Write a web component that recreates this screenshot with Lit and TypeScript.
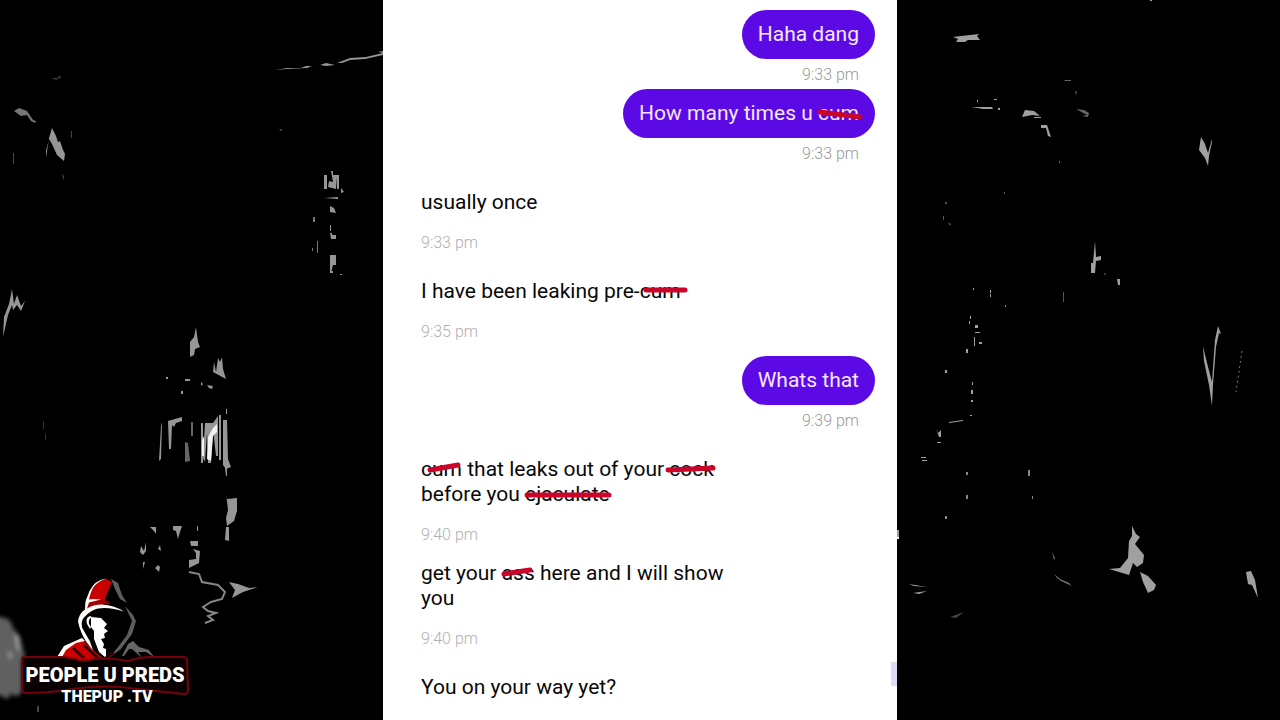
import { LitElement, html, css, svg } from "lit";
import { customElement, property } from "lit/decorators.js";

type Strike = { word: string; line: [number, number, number, number] };
type Part = string | Strike;
type Message = { from: "me" | "them"; time: string; parts: Part[]; follows?: boolean };

const MESSAGES: Message[] = [
  { from: "me", time: "9:33 pm", parts: ["Haha dang"], follows: true },
  { from: "me", time: "9:33 pm", parts: ["How many times u ", { word: "cum", line: [2, 11, 42, 16] }], follows: true },
  { from: "them", time: "9:33 pm", parts: ["usually once"] },
  { from: "them", time: "9:35 pm", parts: ["I have been leaking pre-", { word: "cum", line: [6, 11, 45, 11] }] },
  { from: "me", time: "9:39 pm", parts: ["Whats that"] },
  {
    from: "them",
    time: "9:40 pm",
    parts: [
      { word: "cum", line: [9, 13, 37, 8] },
      " that leaks out of your ",
      { word: "cock", line: [-1, 13, 44, 11] },
      " before you ",
      { word: "ejaculate", line: [2, 13, 84, 13] },
    ],
  },
  {
    from: "them",
    time: "9:40 pm",
    parts: ["get your ", { word: "ass", line: [2, 13, 28, 9] }, " here and I will show you"],
    follows: true,
  },
  { from: "them", time: "", parts: ["You on your way yet?"] },
];

@customElement("chat-message")
class ChatMessage extends LitElement {
  @property({ attribute: false }) message!: Message;

  static styles = css`
    :host { display: block; }
    .row { display: flex; flex-direction: column; align-items: flex-start; }
    .me { align-items: flex-end; }
    .bubble {
      box-sizing: border-box;
      max-width: 75%;
      margin: 0;
      padding: 12px 16px;
      border-radius: 25px;
      font-size: 21px;
      line-height: 25px;
      color: #080808;
    }
    .me .bubble { background: #5b0ae6; color: #f6e6ff; }
    .time {
      padding: 6px 16px 4px;
      font-size: 16px;
      line-height: 20px;
      font-weight: 300;
      color: #b0b0b0;
    }
    .me .time { color: #999; }
    .struck { position: relative; text-decoration: none; }
    .mark {
      position: absolute;
      inset: 0;
      width: 100%;
      height: 100%;
      overflow: visible;
      stroke: #cb0529;
      stroke-width: 5;
      stroke-linecap: round;
    }
  `;

  render() {
    const m = this.message;
    return html`<div class="row ${m.from}">
      <p class="bubble">${m.parts.map((p) =>
        typeof p === "string"
          ? p
          : html`<s class="struck">${p.word}<svg class="mark" aria-hidden="true"><line x1=${p.line[0]} y1=${p.line[1]} x2=${p.line[2]} y2=${p.line[3]} /></svg></s>`
      )}</p>
      ${m.time ? html`<time class="time">${m.time}</time>` : ""}
    </div>`;
  }
}

const leftScene = svg`
  <g fill="#969696">
    <path d="M275 70l12-2 14 0 5-2 6 0-5 2-20 1zM320 65l6-2 9 2-9 1zM337 63l13-5 16-1 17-4v2l-18 4-15 1-8 3zM378 52l5-1v2z"/>
    <path d="M51 78l6 0 3-3 1 3-5 2z" fill="#333"/>
    <path d="M14 111l5-3 8 3 2 3 4 6 3 1-1 2-4-2-4-6-6 1z" fill="#777"/>
    <path d="M46 158l3-20 3-10 4 8 2 6 2-1 3 9 2 4-1 7-7-6-5-11-3-5-3 12z"/>
    <path d="M13 153h1v11h-1zM71 131h1v7h-1zM62 174l2 2v5z" fill="#444"/>
    <path d="M279 130l2-1 1 2zM313 217h2v5h-2zM312 248h1v3h-1zM317 241h1v12h-1z" fill="#777"/>
    <path d="M324 175h3v14h-3zM331 171h2v4h6v14h-2v-12l-1 12-8-2 1-6 4 1zM324 198l14-1v2zM341 188l3 4-3 1zM330 206l4 2 2 5-6-1zM330 225h1v6h-1zM330 233h2v2h4v4h-5zM330 255h6v10h-3l-2 8-1-2v-6zM330 271h3v2h-3zM340 274h2v1h-2z"/>
    <path d="M3 337l1-20 5-13 3-15 2 15 3-9 4 11 4-5-4 10-4-6-4 5-1-5-4 10z"/>
    <path d="M196 327l2 15 2 5-5 2-1 6-4 2v-15l4-5zM214 362l2 10 2-14 2 4 2-5 1 12 3 10-13-7zM185 379h5v2h-5zM166 377h2v2h-2zM181 391h2v3h-2zM201 382l2 2-2 2zM207 385l6 1-1 3-3-1z"/>
    <path d="M43 421h1v8h-1zM45 434h1v6h-1z" fill="#333"/>
    <path d="M162 422l-1 37-2 2 2-35zM168 421l14-4v4l-6 2-2 4-2-2-1 24h-2zM201 423h2v40h-2zM205 423h8l5-7v40h-2l-3-27-2 34h-3l-1-30-2 29-2-4zM223 420h4l1 39 3 8-5 2-3-4zM219 415h2v45h-2zM226 409h1v5h-1zM225 468h2v8h-1z"/>
    <path d="M188 443l2 18-5 1v-20zM191 422h2v14h-2z" fill="#666"/>
    <path d="M226 493l1 6 10-1v13l-3 10-7 5-1-8 2-8zM226 527h3v14l-4-1zM150 527h6v7l-2-3zM173 526h9l-2 6-2 7-2-8-3-1zM197 526h1v5h-1zM141 546l3 5 2-9v9l-3 4-3-3zM160 545l1 6-3-2zM143 562h2l-2 7zM158 565l2 2-1 5-4-4zM190 541h8v5h-7zM193 549l7 2-1 12-10 5v-8l7-1v-6z"/>
    <path d="M229 582l9 2 11 4 9-1-15 5-11 6 3-8z"/>
  </g>
  <path d="M189 572l10 2 3 8 16 3 7 7-3 7-11 3-8 5 5 4 8 2-8 3 5 4-8 3" fill="none" stroke="#858585" stroke-width="2"/>
  <filter id="soft"><feGaussianBlur stdDeviation="2"/></filter>
  <g filter="url(#soft)">
    <path d="M-4 616l12 3 4 5 2 10 6 2 3 14 2 6-3 4v32l-6 5-5-4-3 6-12-5z" fill="#606060"/>
    <path d="M14 628l4 8 2 16-3-4zM8 650l4 5-2 5z" fill="#aaa"/>
  </g>
  <path d="M37 706h2v6h-2z" fill="#444"/>
  <path d="M213 428l4-4v8l-4 4-2 25-4-2 1-22zM202 440l2-4v20h-2z" fill="#f2f2f2"/>
`;

const rightScene = svg`
  <g fill="#a0a0a0">
    <path d="M56 37l8-1 18-2-2 2 3 4-12 0-3 2-9 0 2-3zM253 0h2v1h-2z"/>
    <path d="M75 107l20 0 1 2h-10zM101 108h2v2h-2zM80 100h1v2h-1zM97 99h3v1h-3zM128 110l9 1 6 5-8-1-10 2zM137 117h7v1h-7zM144 125l6 0 4 12-3-1-2-8h-5z"/>
    <path d="M168 80l6 0v1h-7zM178 91l2 1-1 3zM179 109l8 1 5 3-1 4-6-1 5-1zM162 161h1v2h-1z" fill="#666"/>
    <path d="M304 137l4 7 3 9 4-14 0 3-3 14-1 10-3-8-6-8z"/>
    <path d="M198 241l1 16 5-1v4l-5 1-1 12-4 0v-10h2zM207 273l2 3-1-3zM220 279h3v6h-2zM93 290h1v3h-1zM93 294h1v3h-1zM76 288h1v2h-1z"/>
    <path d="M48 202h2v2h-2zM46 216h1v4h-1zM51 222l3 2-1 2zM107 192h1v2h-1zM166 292h1v10h-1z" fill="#555"/>
    <path d="M73 316h1v3h-1zM72 321h1v3h-1zM78 325h3v3h-3zM78 332h5v1h-5zM77 337h1v9h-1zM82 342h3v2h-3zM69 349h2v4h-2zM48 370h2v3h-2zM75 382h1v3h-1zM74 390h2v4h-2zM74 400h2v2h-2zM52 422l14-2v1l-14 2zM73 415h2v1h-2zM39 429l2 4 3-3v7h-2zM40 442h4v1h-4zM24 457h5v1h-5zM25 460h5v1h-5z"/>
    <path d="M69 472h2v3h-2zM69 495h2v4h-2zM48 516h2v3h-2zM131 470h2v6h-2zM135 496h1v3h-1zM108 305h1v2h-1z" fill="#888"/>
    <path d="M306 346l4 17 5 19 3-42 3-14 3 8-2-1-3 14-3 38-1 21-3-21-5-24z"/>
    <path d="M345 351l-6 41" fill="none" stroke="#777" stroke-dasharray="2 3"/>
    <path d="M235 526l4 8 4 3-5 7 5 6 4 5-1 8-6 4-4-4-4 12-20-6 11-1 8-10 1-17 3-5zM243 572l8 4 8 9-2 5-6 3-5-11z"/>
    <path d="M155 552l3 6-1 2zM157 574l6 5 9 4 3 3-11-5-4-3zM176 591l-1 6" fill="#777"/>
    <path d="M349 572l5-1 4 9 3 18-6-13-4-1z"/>
    <path d="M0 530h2v7h-2zM12 584l18 3-13-1zM16 593l14-2-8 3z"/>
    <path d="M0 537h2v2h-2z" fill="#fff"/>
    <path d="M53 617l14-5-8 6z" fill="#444"/>
  </g>
`;

@customElement("channel-logo")
class ChannelLogo extends LitElement {
  static styles = css`
    :host { display: block; }
    .art { display: block; width: 100%; height: auto; overflow: visible; }
    .name { font: 900 20px Roboto, sans-serif; }
    .site { font: 900 16px Roboto, sans-serif; }
  `;
  render() {
    return html`<svg class="art" viewBox="0 0 170 128" role="img" aria-label="People U Preds">
      <g transform="translate(-19 -577)">
        <path d="M57 660l8-12 16-9 12 3 16 12 2 6z" fill="#c00"/>
        <path d="M106 578l-13 8-7 16-1 8-7 10 3 18 11 11 16 14 13-13 14-20-7-17-6-12-8-16z" fill="#000"/>
        <path d="M106 579l6 3-4 9-3 8-2 6-17-1 2-7 4-8 6-7z" fill="#c80000"/>
        <path d="M86 606l5-5 13-2 7 5-12 0-10 4-5 4z" fill="#a00000"/>
        <path d="M107 578.500q-9 1-14 7-4 5-6 12-2 3-2 12-6 4-7 12 2 10 8 20l7 9-3-9-8-14q-1-7 2-10 6-7 14-9 11-2 26 3-9-6-22-7-9 0-15 4l2-6 12-3q-9-1-12 0 2-9 5-13 5-6 13-8z" fill="#fffaf5"/>
        <path d="M111 579l7 4 4 12 5 8-7-4-5-10zM125 606l8 9 3 6-4 13-11 15-12 9 9-11 9-12 5-14z" fill="#5d5d5d"/>
        <path d="M87 624q-2-6 3-8l2 1q-4 2-3 7l2 3-1 2z" fill="#fff"/>
        <path d="M91 617l10 1 6 6-3 4 4 3-4 3 1 4-4 1 3 5-1 4 3 1v9l-7-6-5-13 0-8-3-4z" fill="#fff"/>
        <path d="M57 657l7-11 18-8 3 3-9 2-10 7-4 7z" fill="#fffaf5"/>
        <path d="M73 648l11 10M84 645l15 14M103 660l11-8" stroke="#310000" stroke-width="3"/>
        <path d="M122 656l6-12 5-3 6 6 10 3 5 7-8-5-8 0 4 6-10-9-3 0-5 7z" fill="#666"/>
        <path d="M22 659q0-2 3-2h39q10 1 18 4 24-5 46 0 12-4 22-4h33q4 0 4 3l1 30q0 4-4 4-29-3-46-5-33-5-65 0-25 4-46 4-5 0-5-4z" fill="#090002" stroke="#75000e" stroke-width="2"/>
        <text class="name" x="105" y="682" text-anchor="middle" fill="#fff">PEOPLE U PREDS</text>
        <text class="site" x="107" y="702" text-anchor="middle" fill="#fff">THEPUP .TV</text>
      </g>
    </svg>`;
  }
}

@customElement("app-root")
class AppRoot extends LitElement {
  static styles = css`
    :host { display: block; font-family: Roboto, "Liberation Sans", sans-serif; }
    .stage {
      display: grid;
      grid-template-columns: minmax(0, 1fr) minmax(0, 514px) minmax(0, 1fr);
      height: 100vh;
      overflow: hidden;
      background: #000;
    }
    .side { position: relative; min-height: 0; }
    .scene { display: block; width: 100%; height: 100%; }
    .logo { position: absolute; left: 19px; bottom: 15px; width: 170px; }
    .phone {
      position: relative;
      box-sizing: border-box;
      min-height: 0;
      padding: 10px 22px 0;
      overflow: hidden;
      background: #fff;
    }
    .spaced { margin-top: 10px; }
    .thumb { position: absolute; right: 0; bottom: 34px; width: 6px; height: 24px; background: #e2d9fa; }
  `;

  render() {
    return html`<div class="stage">
      <div class="side">
        <svg class="scene" viewBox="0 0 383 720" preserveAspectRatio="xMidYMid slice" aria-hidden="true">${leftScene}</svg>
        <channel-logo class="logo"></channel-logo>
      </div>
      <main class="phone">
        ${MESSAGES.map((m) => html`<chat-message class=${m.follows ? "" : "spaced"} .message=${m}></chat-message>`)}
        <div class="thumb"></div>
      </main>
      <div class="side">
        <svg class="scene" viewBox="0 0 383 720" preserveAspectRatio="xMidYMid slice" aria-hidden="true">${rightScene}</svg>
      </div>
    </div>`;
  }
}
